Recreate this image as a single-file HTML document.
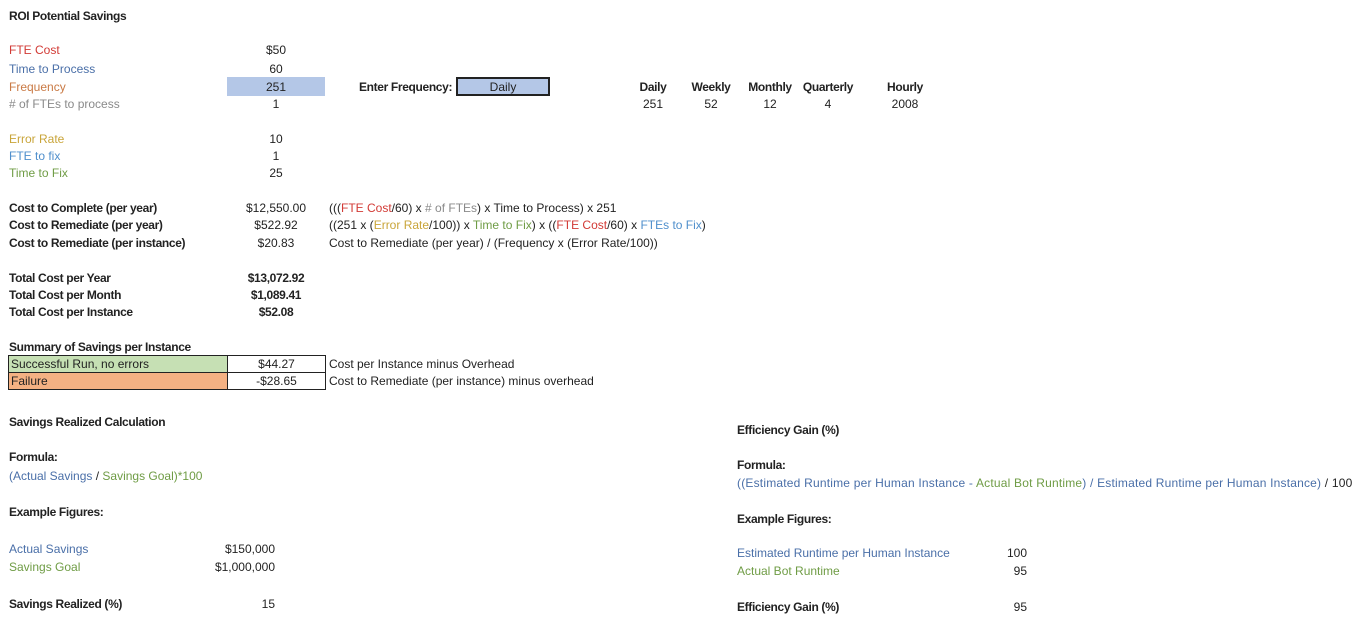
<!DOCTYPE html>
<html><head><meta charset="utf-8"><style>
body{margin:0;width:1364px;height:632px;background:#fff;position:relative;overflow:hidden;font-family:"Liberation Sans",sans-serif;font-size:12px;color:#222;letter-spacing:0}
.t{position:absolute;line-height:14px;white-space:nowrap;margin-top:1px}
.b{font-weight:bold;letter-spacing:-0.35px}
.c{text-align:center}
.r{text-align:right}
.red{color:#d23a35}.blu{color:#4a6fa8}.org{color:#c97a45}.gry{color:#8a8a8a}.yel{color:#c9a53a}.lb{color:#4f8fcc}.grn{color:#6f9c45}
.box{position:absolute;box-sizing:border-box}
</style></head><body>
<div class="t b" style="left:9px;top:8px">ROI Potential Savings</div>
<div class="t red" style="left:9px;top:42px">FTE Cost</div>
<div class="t blu" style="left:9px;top:61px">Time to Process</div>
<div class="box" style="left:227px;top:77px;width:98px;height:19px;background:#b4c7e7"></div>
<div class="t org" style="left:9px;top:79px">Frequency</div>
<div class="t gry" style="left:9px;top:96px"># of FTEs to process</div>
<div class="t c" style="left:227px;width:98px;top:42px">$50</div>
<div class="t c" style="left:227px;width:98px;top:61px">60</div>
<div class="t c" style="left:227px;width:98px;top:79px">251</div>
<div class="t c" style="left:227px;width:98px;top:96px">1</div>
<div class="t b" style="left:359px;top:79px">Enter Frequency:</div>
<div class="box" style="left:456px;top:77px;width:94px;height:19px;background:#b4c7e7;border:2px solid #222"></div>
<div class="t c" style="left:456px;width:94px;top:79px">Daily</div>
<div class="t b c" style="left:623px;width:60px;top:79px">Daily</div>
<div class="t b c" style="left:681px;width:60px;top:79px">Weekly</div>
<div class="t b c" style="left:740px;width:60px;top:79px">Monthly</div>
<div class="t b c" style="left:796px;width:64px;top:79px">Quarterly</div>
<div class="t b c" style="left:875px;width:60px;top:79px">Hourly</div>
<div class="t c" style="left:623px;width:60px;top:96px">251</div>
<div class="t c" style="left:681px;width:60px;top:96px">52</div>
<div class="t c" style="left:740px;width:60px;top:96px">12</div>
<div class="t c" style="left:798px;width:60px;top:96px">4</div>
<div class="t c" style="left:875px;width:60px;top:96px">2008</div>
<div class="t yel" style="left:9px;top:131px">Error Rate</div>
<div class="t lb" style="left:9px;top:148px">FTE to fix</div>
<div class="t grn" style="left:9px;top:165px">Time to Fix</div>
<div class="t c" style="left:227px;width:98px;top:131px">10</div>
<div class="t c" style="left:227px;width:98px;top:148px">1</div>
<div class="t c" style="left:227px;width:98px;top:165px">25</div>
<div class="t b" style="left:9px;top:200px">Cost to Complete (per year)</div>
<div class="t b" style="left:9px;top:217px">Cost to Remediate (per year)</div>
<div class="t b" style="left:9px;top:235px">Cost to Remediate (per instance)</div>
<div class="t c" style="left:227px;width:98px;top:200px">$12,550.00</div>
<div class="t c" style="left:227px;width:98px;top:217px">$522.92</div>
<div class="t c" style="left:227px;width:98px;top:235px">$20.83</div>
<div class="t" style="left:329px;top:200px">(((<span class="red">FTE Cost</span>/60) x <span class="gry"># of FTEs</span>) x Time to Process) x 251</div>
<div class="t" style="left:329px;top:217px">((251 x (<span class="yel">Error Rate</span>/100)) x <span class="grn">Time to Fix</span>) x ((<span class="red">FTE Cost</span>/60) x <span class="lb">FTEs to Fix</span>)</div>
<div class="t" style="left:329px;top:235px">Cost to Remediate (per year) / (Frequency x (Error Rate/100))</div>
<div class="t b" style="left:9px;top:270px">Total Cost per Year</div>
<div class="t b" style="left:9px;top:287px">Total Cost per Month</div>
<div class="t b" style="left:9px;top:304px">Total Cost per Instance</div>
<div class="t b c" style="left:227px;width:98px;top:270px">$13,072.92</div>
<div class="t b c" style="left:227px;width:98px;top:287px">$1,089.41</div>
<div class="t b c" style="left:227px;width:98px;top:304px">$52.08</div>
<div class="t b" style="left:9px;top:339px">Summary of Savings per Instance</div>
<div class="box" style="left:8px;top:355px;width:220px;height:18px;background:#c6e0b4;border:1px solid #222"></div>
<div class="box" style="left:8px;top:372px;width:220px;height:18px;background:#f4b183;border:1px solid #222"></div>
<div class="box" style="left:227px;top:355px;width:99px;height:18px;border:1px solid #222"></div>
<div class="box" style="left:227px;top:372px;width:99px;height:18px;border:1px solid #222"></div>
<div class="t" style="left:11px;top:356px">Successful Run, no errors</div>
<div class="t" style="left:11px;top:373px">Failure</div>
<div class="t c" style="left:227px;width:99px;top:356px">$44.27</div>
<div class="t c" style="left:227px;width:99px;top:373px">-$28.65</div>
<div class="t" style="left:329px;top:356px">Cost per Instance minus Overhead</div>
<div class="t" style="left:329px;top:373px">Cost to Remediate (per instance) minus overhead</div>
<div class="t b" style="left:9px;top:414px">Savings Realized Calculation</div>
<div class="t b" style="left:9px;top:449px">Formula:</div>
<div class="t" style="left:9px;top:468px"><span class="blu">(Actual Savings </span>/ <span class="grn">Savings Goal)*100</span></div>
<div class="t b" style="left:9px;top:504px">Example Figures:</div>
<div class="t blu" style="left:9px;top:541px">Actual Savings</div>
<div class="t grn" style="left:9px;top:559px">Savings Goal</div>
<div class="t r" style="left:175px;width:100px;top:541px">$150,000</div>
<div class="t r" style="left:175px;width:100px;top:559px">$1,000,000</div>
<div class="t b" style="left:9px;top:596px">Savings Realized (%)</div>
<div class="t r" style="left:175px;width:100px;top:596px">15</div>
<div class="t b" style="left:737px;top:422px">Efficiency Gain (%)</div>
<div class="t b" style="left:737px;top:457px">Formula:</div>
<div class="t" style="left:737px;top:475px;letter-spacing:0.2px"><span class="blu">((Estimated Runtime per Human Instance - </span><span class="grn">Actual Bot Runtime</span><span class="blu">) / Estimated Runtime per Human Instance)</span> / 100</div>
<div class="t b" style="left:737px;top:511px">Example Figures:</div>
<div class="t blu" style="left:737px;top:545px">Estimated Runtime per Human Instance</div>
<div class="t grn" style="left:737px;top:563px">Actual Bot Runtime</div>
<div class="t r" style="left:927px;width:100px;top:545px">100</div>
<div class="t r" style="left:927px;width:100px;top:563px">95</div>
<div class="t b" style="left:737px;top:599px">Efficiency Gain (%)</div>
<div class="t r" style="left:927px;width:100px;top:599px">95</div>
</body></html>
